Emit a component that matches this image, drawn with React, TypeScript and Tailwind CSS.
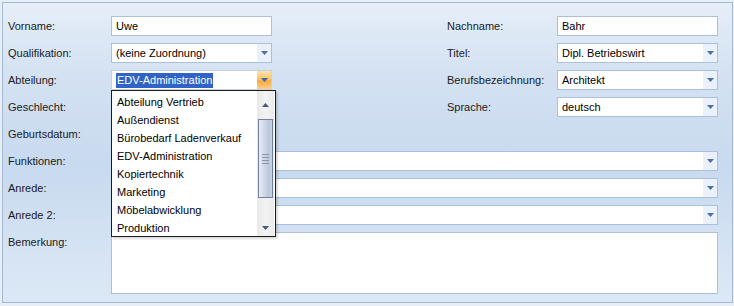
import React from "react";

const Arrow = ({ color = "#4d6fa3" }: { color?: string }) => (
  <svg width="7" height="4" viewBox="0 0 7 4" className="block">
    <polygon points="0,0 7,0 3.5,4" fill={color} />
  </svg>
);

const Input = ({ value = "", w }: { value?: string; w: string }) => (
  <div className={`${w} h-[20px] bg-white border border-[#abc0dc] flex items-center pl-[4px] text-[#000]`}>
    {value}
  </div>
);

const Combo = ({ value = "", w }: { value?: string; w: string }) => (
  <div className={`${w} h-[20px] bg-white border border-[#abc0dc] flex items-center`}>
    <div className="flex-1 pl-[4px] text-[#000] whitespace-nowrap overflow-hidden">{value}</div>
    <div className="w-[14px] h-full bg-[#eaf1fa] flex items-center justify-center">
      <Arrow />
    </div>
  </div>
);

const Label = ({ children, w = "w-[103px]" }: { children: React.ReactNode; w?: string }) => (
  <div className={`${w} text-[#1a1a1a] whitespace-nowrap`}>{children}</div>
);

const items = [
  "Abteilung Vertrieb",
  "Außendienst",
  "Bürobedarf Ladenverkauf",
  "EDV-Administration",
  "Kopiertechnik",
  "Marketing",
  "Möbelabwicklung",
  "Produktion",
];

export default function App() {
  return (
    <div className="w-[734px] h-[306px] bg-[#e6eef8] pt-[2px] pl-[2px] font-['Liberation_Sans',Arial,sans-serif] text-[11px] leading-none">
      <div className="relative w-[731px] h-[301px] border border-[#a5b9d5] bg-[linear-gradient(to_bottom,#e6eef8_0%,#d3e1f2_25%,#c8daef_55%,#d6e4f4_85%,#dce8f5_100%)] pt-[13px] pl-[5px] flex flex-col gap-[7px]">
        <div className="flex items-center h-[20px]">
          <Label>Vorname:</Label>
          <Input value="Uwe" w="w-[161px]" />
          <div className="w-[175px]" />
          <Label w="w-[110px]">Nachname:</Label>
          <Input value="Bahr" w="w-[161px]" />
        </div>
        <div className="flex items-center h-[20px]">
          <Label>Qualifikation:</Label>
          <Combo value="(keine Zuordnung)" w="w-[161px]" />
          <div className="w-[175px]" />
          <Label w="w-[110px]">Titel:</Label>
          <Combo value="Dipl. Betriebswirt" w="w-[161px]" />
        </div>
        <div className="flex items-center h-[20px]">
          <Label>Abteilung:</Label>
          <div className="w-[161px] h-[20px] bg-white border border-[#c3d2e7] flex items-center">
            <div className="flex-1 pl-[4px] flex items-center">
              <span className="bg-[#3163c6] text-white h-[15px] flex items-center px-[1px]">EDV-Administration</span>
            </div>
            <div className="w-[14px] h-full bg-[linear-gradient(to_bottom,#fde3a8_0%,#f9c36c_45%,#f7a941_55%,#fbd08a_100%)] flex items-center justify-center">
              <Arrow color="#3d64a8" />
            </div>
          </div>
          <div className="w-[175px]" />
          <Label w="w-[110px]">Berufsbezeichnung:</Label>
          <Combo value="Architekt" w="w-[161px]" />
        </div>
        <div className="flex items-center h-[20px]">
          <Label>Geschlecht:</Label>
          <Combo value="" w="w-[161px]" />
          <div className="w-[175px]" />
          <Label w="w-[110px]">Sprache:</Label>
          <Combo value="deutsch" w="w-[161px]" />
        </div>
        <div className="flex items-center h-[20px]">
          <Label>Geburtsdatum:</Label>
          <Combo value="" w="w-[161px]" />
        </div>
        <div className="flex items-center h-[20px]">
          <Label>Funktionen:</Label>
          <Combo value="" w="w-[607px]" />
        </div>
        <div className="flex items-center h-[20px]">
          <Label>Anrede:</Label>
          <Combo value="" w="w-[607px]" />
        </div>
        <div className="flex items-center h-[20px]">
          <Label>Anrede 2:</Label>
          <Combo value="" w="w-[607px]" />
        </div>
        <div className="flex items-start">
          <div className="w-[103px] pt-[5px] text-[#1a1a1a]">Bemerkung:</div>
          <div className="w-[607px] h-[62px] bg-white border border-[#abc0dc]" />
        </div>

        {/* dropdown list */}
        <div className="absolute left-[108px] top-[87px] w-[165px] h-[147px] bg-white border border-[#1c1c1c] shadow-[2px_2px_2px_rgba(0,0,0,0.15)] flex">
          <div className="flex-1 pt-[2px] pl-[5px]">
            {items.map((it) => (
              <div key={it} className="h-[18px] flex items-center text-[#000] whitespace-nowrap">
                {it}
              </div>
            ))}
          </div>
          <div className="w-[17px] mr-[1px] h-full bg-[linear-gradient(to_right,#e9e9e9,#f3f3f3_50%,#eaeaea)] flex flex-col items-center">
            <div className="h-[28px] flex items-center justify-center">
              <svg width="7" height="4" viewBox="0 0 7 4" className="block">
                <polygon points="3.5,0 7,4 0,4" fill="#4a5a78" />
              </svg>
            </div>
            <div className="w-[15px] h-[79px] border border-[#6f80a3] bg-[linear-gradient(to_right,#e8edf6,#cfd8e8_40%,#bcc7dc_75%,#c9d2e4)] flex flex-col items-center justify-center gap-[2px]">
              <div className="w-[7px] h-[1px] bg-[#8893ab]" />
              <div className="w-[7px] h-[1px] bg-[#8893ab]" />
              <div className="w-[7px] h-[1px] bg-[#8893ab]" />
              <div className="w-[7px] h-[1px] bg-[#8893ab]" />
            </div>
            <div className="flex-1 flex items-end justify-center pb-[6px]">
              <svg width="7" height="4" viewBox="0 0 7 4" className="block">
                <polygon points="0,0 7,0 3.5,4" fill="#4a5a78" />
              </svg>
            </div>
          </div>
        </div>
      </div>
    </div>
  );
}
